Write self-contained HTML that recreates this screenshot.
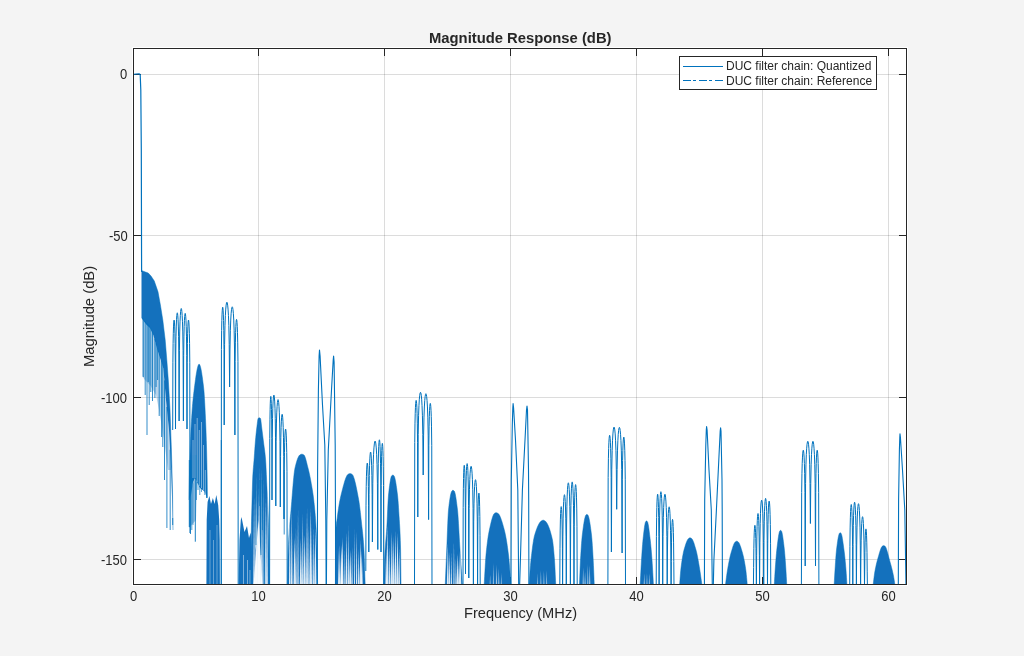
<!DOCTYPE html>
<html><head><meta charset="utf-8"><style>
html,body{margin:0;padding:0;width:1024px;height:656px;overflow:hidden;background:#f4f4f4;}
.t{position:absolute;font-family:"Liberation Sans",sans-serif;color:#262626;white-space:nowrap;line-height:1;will-change:transform;}
svg{position:absolute;left:0;top:0;}
</style></head><body>
<svg width="1024" height="656" viewBox="0 0 1024 656">
<rect x="132" y="47" width="776" height="539" fill="#fff"/>
<g stroke="#262626" stroke-opacity="0.16" stroke-width="1" shape-rendering="crispEdges">
<line x1="258.5" y1="49" x2="258.5" y2="584"/>
<line x1="384.5" y1="49" x2="384.5" y2="584"/>
<line x1="510.5" y1="49" x2="510.5" y2="584"/>
<line x1="636.5" y1="49" x2="636.5" y2="584"/>
<line x1="762.5" y1="49" x2="762.5" y2="584"/>
<line x1="888.5" y1="49" x2="888.5" y2="584"/>
<line x1="134" y1="235.5" x2="906" y2="235.5"/>
<line x1="134" y1="397.5" x2="906" y2="397.5"/>
<line x1="134" y1="559.5" x2="906" y2="559.5"/>
<line x1="134" y1="74.5" x2="906" y2="74.5"/>
</g>
<g stroke="#262626" stroke-width="1" shape-rendering="crispEdges" fill="none">
<line x1="133.5" y1="48" x2="133.5" y2="56"/>
<line x1="133.5" y1="585" x2="133.5" y2="577"/>
<line x1="258.5" y1="48" x2="258.5" y2="56"/>
<line x1="258.5" y1="585" x2="258.5" y2="577"/>
<line x1="384.5" y1="48" x2="384.5" y2="56"/>
<line x1="384.5" y1="585" x2="384.5" y2="577"/>
<line x1="510.5" y1="48" x2="510.5" y2="56"/>
<line x1="510.5" y1="585" x2="510.5" y2="577"/>
<line x1="636.5" y1="48" x2="636.5" y2="56"/>
<line x1="636.5" y1="585" x2="636.5" y2="577"/>
<line x1="762.5" y1="48" x2="762.5" y2="56"/>
<line x1="762.5" y1="585" x2="762.5" y2="577"/>
<line x1="888.5" y1="48" x2="888.5" y2="56"/>
<line x1="888.5" y1="585" x2="888.5" y2="577"/>
<line x1="133" y1="74.5" x2="141" y2="74.5"/>
<line x1="907" y1="74.5" x2="899" y2="74.5"/>
<line x1="133" y1="235.5" x2="141" y2="235.5"/>
<line x1="907" y1="235.5" x2="899" y2="235.5"/>
<line x1="133" y1="397.5" x2="141" y2="397.5"/>
<line x1="907" y1="397.5" x2="899" y2="397.5"/>
<line x1="133" y1="559.5" x2="141" y2="559.5"/>
<line x1="907" y1="559.5" x2="899" y2="559.5"/>
</g>
<g clip-path="url(#clip)">
<clipPath id="clip"><rect x="134" y="49" width="772" height="535"/></clipPath>
<polyline points="133.50,74.50 136.00,74.00 139.00,73.80 140.20,74.60 140.80,90.00 141.30,150.00 141.60,272.00" fill="none" stroke="#0072bd" stroke-width="1.2" stroke-linejoin="round"/>
<polygon points="141.50,270.50 144.00,271.50 148.20,273.00 151.00,276.00 154.30,281.00 158.00,291.80 160.40,305.00 162.80,320.00 165.20,340.00 166.90,361.00 168.30,380.00 170.00,410.00 171.40,450.00 172.50,490.00 173.00,530.00 173.00,530.00 171.20,470.00 169.00,430.00 166.00,400.00 163.30,368.30 160.20,358.50 157.80,351.20 156.00,345.00 153.50,335.40 149.90,328.00 146.20,324.40 142.50,319.50 141.50,318.00" fill="#1471bd"/>
<polyline points="141.50,270.50 144.00,271.50 148.20,273.00 151.00,276.00 154.30,281.00 158.00,291.80 160.40,305.00 162.80,320.00 165.20,340.00 166.90,361.00 168.30,380.00 170.00,410.00 171.40,450.00 172.50,490.00 173.00,530.00" fill="none" stroke="#0072bd" stroke-width="0.8" stroke-opacity="0.6" stroke-linejoin="round"/>
<polygon points="142.00,318.00 146.00,324.00 150.00,328.00 154.00,336.00 158.00,352.00 163.00,368.00 166.00,400.00 169.00,430.00 171.00,470.00 168.00,470.00 164.00,440.00 160.00,415.00 156.00,395.00 150.00,385.00 145.00,380.00 142.00,376.00" fill="#1471bd" fill-opacity="0.3"/>
<line x1="145.20" y1="321.08" x2="145.20" y2="395.00" stroke="#0072bd" stroke-width="1.0" stroke-opacity="0.8"/>
<line x1="148.20" y1="324.35" x2="148.20" y2="382.00" stroke="#0072bd" stroke-width="1.0" stroke-opacity="0.8"/>
<line x1="150.80" y1="327.85" x2="150.80" y2="392.00" stroke="#0072bd" stroke-width="1.0" stroke-opacity="0.8"/>
<line x1="157.60" y1="348.51" x2="157.60" y2="380.00" stroke="#0072bd" stroke-width="1.0" stroke-opacity="0.8"/>
<line x1="143.30" y1="318.56" x2="143.30" y2="377.00" stroke="#0072bd" stroke-width="1.0" stroke-opacity="0.8"/>
<line x1="147.00" y1="323.18" x2="147.00" y2="435.00" stroke="#0072bd" stroke-width="1.0" stroke-opacity="0.8"/>
<line x1="149.20" y1="325.32" x2="149.20" y2="405.00" stroke="#0072bd" stroke-width="1.0" stroke-opacity="0.8"/>
<line x1="152.50" y1="331.34" x2="152.50" y2="401.00" stroke="#0072bd" stroke-width="1.0" stroke-opacity="0.8"/>
<line x1="154.90" y1="338.78" x2="154.90" y2="398.00" stroke="#0072bd" stroke-width="1.0" stroke-opacity="0.8"/>
<line x1="156.10" y1="343.34" x2="156.10" y2="387.00" stroke="#0072bd" stroke-width="1.0" stroke-opacity="0.8"/>
<line x1="159.20" y1="353.46" x2="159.20" y2="416.00" stroke="#0072bd" stroke-width="1.0" stroke-opacity="0.8"/>
<line x1="161.60" y1="360.93" x2="161.60" y2="437.00" stroke="#0072bd" stroke-width="1.0" stroke-opacity="0.8"/>
<line x1="162.80" y1="364.72" x2="162.80" y2="447.00" stroke="#0072bd" stroke-width="1.0" stroke-opacity="0.8"/>
<line x1="164.50" y1="380.39" x2="164.50" y2="480.00" stroke="#0072bd" stroke-width="1.0" stroke-opacity="0.8"/>
<line x1="166.90" y1="407.00" x2="166.90" y2="528.00" stroke="#0072bd" stroke-width="1.0" stroke-opacity="0.8"/>
<line x1="170.20" y1="449.82" x2="170.20" y2="530.00" stroke="#0072bd" stroke-width="1.0" stroke-opacity="0.8"/>
<line x1="172.70" y1="518.00" x2="172.70" y2="525.00" stroke="#0072bd" stroke-width="1.0" stroke-opacity="0.8"/>
<polyline points="172.70,430.00 172.90,362.21 173.10,343.45 173.30,333.27 173.50,326.91 173.70,322.93 173.90,320.71 174.10,320.00 174.30,320.71 174.50,322.93 174.70,326.91 174.90,333.27 175.10,343.45 175.30,362.21 175.50,429.00 175.76,355.01 176.01,336.25 176.27,326.07 176.53,319.71 176.79,315.73 177.04,313.51 177.30,312.80 177.56,313.51 177.81,315.73 178.07,319.71 178.33,326.07 178.59,336.25 178.84,355.01 179.10,421.00 179.41,350.71 179.71,331.95 180.02,321.77 180.33,315.41 180.64,311.43 180.94,309.21 181.25,308.50 181.56,309.21 181.86,311.43 182.17,315.41 182.48,321.77 182.79,331.95 183.09,350.71 183.40,421.00 183.66,355.61 183.91,336.85 184.17,326.67 184.43,320.31 184.69,316.33 184.94,314.11 185.20,313.40 185.46,314.11 185.71,316.33 185.97,320.31 186.23,326.67 186.49,336.85 186.74,355.61 187.00,429.00 187.21,362.21 187.43,343.45 187.64,333.27 187.86,326.91 188.07,322.93 188.29,320.71 188.50,320.00 188.71,320.71 188.93,322.93 189.14,326.91 189.36,333.27 189.57,343.45 189.79,362.21 190.00,533.00" fill="none" stroke="#0072bd" stroke-width="1.0" stroke-linejoin="round"/>
<polygon points="189.00,500.00 189.30,484.15 189.60,470.00 189.86,460.31 190.12,451.45 190.38,443.54 190.64,436.68 190.90,431.00 191.15,426.21 191.41,421.72 191.66,417.53 191.92,413.63 192.17,410.00 192.43,406.63 192.68,403.53 192.94,400.67 193.19,398.05 193.45,395.67 193.70,393.50 193.96,391.42 194.21,389.35 194.47,387.29 194.73,385.27 194.99,383.27 195.24,381.33 195.50,379.44 195.76,377.61 196.01,375.86 196.27,374.19 196.53,372.62 196.79,371.15 197.04,369.79 197.30,368.56 197.56,367.46 197.81,366.51 198.07,365.70 198.33,365.06 198.59,364.59 198.84,364.30 199.10,364.20 199.36,364.30 199.61,364.59 199.87,365.06 200.12,365.71 200.38,366.52 200.63,367.49 200.89,368.61 201.14,369.87 201.40,371.26 201.66,372.78 201.91,374.41 202.17,376.14 202.42,377.98 202.68,379.90 202.93,381.90 203.19,383.97 203.44,386.11 203.70,388.30 203.96,390.95 204.21,394.35 204.47,398.40 204.73,402.98 204.99,407.98 205.24,413.29 205.50,418.80 205.78,425.11 206.05,432.26 206.32,440.49 206.60,450.00 206.90,462.73 207.20,480.00 207.40,498.00 207.40,498.00 204.00,491.00 200.00,488.00 197.00,482.00 195.00,478.00 193.00,482.00 191.00,495.00 189.00,500.00" fill="#1471bd"/>
<polygon points="189.00,495.00 195.00,478.00 197.00,482.00 196.00,520.00 189.00,528.00" fill="#1471bd" fill-opacity="0.4"/>
<polyline points="189.00,500.00 189.30,484.15 189.60,470.00 189.86,460.31 190.12,451.45 190.38,443.54 190.64,436.68 190.90,431.00 191.15,426.21 191.41,421.72 191.66,417.53 191.92,413.63 192.17,410.00 192.43,406.63 192.68,403.53 192.94,400.67 193.19,398.05 193.45,395.67 193.70,393.50 193.96,391.42 194.21,389.35 194.47,387.29 194.73,385.27 194.99,383.27 195.24,381.33 195.50,379.44 195.76,377.61 196.01,375.86 196.27,374.19 196.53,372.62 196.79,371.15 197.04,369.79 197.30,368.56 197.56,367.46 197.81,366.51 198.07,365.70 198.33,365.06 198.59,364.59 198.84,364.30 199.10,364.20 199.36,364.30 199.61,364.59 199.87,365.06 200.12,365.71 200.38,366.52 200.63,367.49 200.89,368.61 201.14,369.87 201.40,371.26 201.66,372.78 201.91,374.41 202.17,376.14 202.42,377.98 202.68,379.90 202.93,381.90 203.19,383.97 203.44,386.11 203.70,388.30 203.96,390.95 204.21,394.35 204.47,398.40 204.73,402.98 204.99,407.98 205.24,413.29 205.50,418.80 205.78,425.11 206.05,432.26 206.32,440.49 206.60,450.00 206.90,462.73 207.20,480.00 207.40,498.00" fill="none" stroke="#0072bd" stroke-width="0.8" stroke-opacity="0.6" stroke-linejoin="round"/>
<line x1="189.30" y1="460.00" x2="189.30" y2="527.00" stroke="#0072bd" stroke-width="1.0" stroke-opacity="0.9"/>
<line x1="190.50" y1="460.00" x2="190.50" y2="534.00" stroke="#0072bd" stroke-width="1.0" stroke-opacity="0.8"/>
<line x1="191.80" y1="460.00" x2="191.80" y2="530.00" stroke="#0072bd" stroke-width="1.0" stroke-opacity="0.7"/>
<line x1="193.00" y1="455.00" x2="193.00" y2="525.00" stroke="#0072bd" stroke-width="1.0" stroke-opacity="0.6"/>
<line x1="195.30" y1="455.00" x2="195.30" y2="541.70" stroke="#0072bd" stroke-width="1.0" stroke-opacity="0.9"/>
<line x1="196.50" y1="455.00" x2="196.50" y2="500.00" stroke="#0072bd" stroke-width="1.0" stroke-opacity="0.6"/>
<line x1="198.00" y1="460.00" x2="198.00" y2="490.00" stroke="#0072bd" stroke-width="1.0" stroke-opacity="0.7"/>
<line x1="199.80" y1="470.00" x2="199.80" y2="495.00" stroke="#0072bd" stroke-width="1.0" stroke-opacity="0.7"/>
<line x1="201.50" y1="470.00" x2="201.50" y2="492.00" stroke="#0072bd" stroke-width="1.0" stroke-opacity="0.6"/>
<line x1="203.00" y1="480.00" x2="203.00" y2="488.00" stroke="#0072bd" stroke-width="1.0" stroke-opacity="0.8"/>
<line x1="204.90" y1="480.00" x2="204.90" y2="495.00" stroke="#0072bd" stroke-width="1.0" stroke-opacity="0.8"/>
<line x1="206.50" y1="480.00" x2="206.50" y2="498.00" stroke="#0072bd" stroke-width="1.0" stroke-opacity="0.8"/>
<line x1="193.00" y1="440.00" x2="193.00" y2="478.00" stroke="#ffffff" stroke-width="0.8" stroke-opacity="0.55"/>
<line x1="195.00" y1="424.00" x2="195.00" y2="478.00" stroke="#ffffff" stroke-width="0.8" stroke-opacity="0.55"/>
<line x1="197.20" y1="418.00" x2="197.20" y2="482.00" stroke="#ffffff" stroke-width="0.8" stroke-opacity="0.55"/>
<line x1="199.30" y1="430.00" x2="199.30" y2="486.00" stroke="#ffffff" stroke-width="0.8" stroke-opacity="0.55"/>
<line x1="201.50" y1="422.00" x2="201.50" y2="488.00" stroke="#ffffff" stroke-width="0.8" stroke-opacity="0.55"/>
<line x1="203.50" y1="445.00" x2="203.50" y2="490.00" stroke="#ffffff" stroke-width="0.8" stroke-opacity="0.55"/>
<line x1="205.30" y1="470.00" x2="205.30" y2="495.00" stroke="#ffffff" stroke-width="0.8" stroke-opacity="0.55"/>
<polygon points="206.40,586.00 206.70,520.00 207.60,502.00 209.40,496.00 211.00,504.00 212.90,498.00 214.60,504.00 216.30,494.90 218.20,505.00 219.20,520.00 219.70,540.00 219.90,586.00" fill="#1471bd"/>
<line x1="210.00" y1="530.00" x2="210.00" y2="586.00" stroke="#ffffff" stroke-width="0.8" stroke-opacity="0.45"/>
<line x1="213.50" y1="540.00" x2="213.50" y2="586.00" stroke="#ffffff" stroke-width="0.8" stroke-opacity="0.45"/>
<line x1="217.00" y1="525.00" x2="217.00" y2="586.00" stroke="#ffffff" stroke-width="0.8" stroke-opacity="0.45"/>
<line x1="221.30" y1="440.00" x2="221.30" y2="586.00" stroke="#0072bd" stroke-width="1.0" stroke-opacity="0.9"/>
<polyline points="221.20,586.00 221.41,349.41 221.63,330.65 221.84,320.47 222.06,314.11 222.27,310.13 222.49,307.91 222.70,307.20 222.91,307.91 223.13,310.13 223.34,314.11 223.56,320.47 223.77,330.65 223.99,349.41 224.20,425.00 224.59,344.41 224.97,325.65 225.36,315.47 225.74,309.11 226.13,305.13 226.51,302.91 226.90,302.20 227.29,302.91 227.67,305.13 228.06,309.11 228.44,315.47 228.83,325.65 229.21,344.41 229.60,387.00 229.98,349.01 230.36,330.25 230.74,320.07 231.11,313.71 231.49,309.73 231.87,307.51 232.25,306.80 232.63,307.51 233.01,309.73 233.39,313.71 233.76,320.07 234.14,330.25 234.52,349.01 234.90,435.00 235.14,361.61 235.37,342.85 235.61,332.67 235.84,326.31 236.08,322.33 236.31,320.11 236.55,319.40 236.79,320.11 237.02,322.33 237.26,326.31 237.49,332.67 237.73,342.85 237.96,361.61 238.20,586.00" fill="none" stroke="#0072bd" stroke-width="1.0" stroke-linejoin="round"/>
<polygon points="238.60,586.00 239.50,540.00 240.80,520.00 241.50,517.00 242.50,522.00 244.50,532.00 247.00,526.00 249.00,538.00 250.70,532.40 251.80,548.00 252.50,586.00" fill="#1471bd"/>
<line x1="243.50" y1="555.00" x2="243.50" y2="586.00" stroke="#ffffff" stroke-width="0.9" stroke-opacity="0.5"/>
<line x1="247.50" y1="560.00" x2="247.50" y2="586.00" stroke="#ffffff" stroke-width="0.9" stroke-opacity="0.5"/>
<line x1="250.00" y1="570.00" x2="250.00" y2="586.00" stroke="#ffffff" stroke-width="0.9" stroke-opacity="0.5"/>
<polygon points="251.00,586.00 251.00,586.00 251.20,540.00 251.50,521.18 251.80,510.00 252.05,499.79 252.30,490.22 252.55,482.04 252.80,476.00 253.10,471.15 253.40,467.45 253.70,464.18 254.00,460.60 254.25,457.16 254.50,453.55 254.75,449.90 255.00,446.34 255.25,443.00 255.50,440.00 255.75,437.30 256.00,434.75 256.25,432.36 256.50,430.10 256.75,427.98 257.00,426.00 257.28,423.67 257.57,421.33 257.85,419.45 258.13,418.50 258.40,418.21 258.67,417.99 258.93,417.85 259.20,417.80 259.47,417.83 259.73,417.91 260.00,418.06 260.26,418.25 260.53,418.50 260.85,420.03 261.18,423.00 261.50,426.00 261.75,427.96 262.00,429.93 262.25,431.90 262.50,433.89 262.75,435.89 263.00,437.91 263.25,439.94 263.50,442.00 263.76,444.07 264.02,446.02 264.29,447.92 264.55,449.87 264.81,451.96 265.08,454.28 265.34,456.93 265.60,460.00 265.85,463.93 266.10,468.99 266.35,474.56 266.60,480.00 266.88,485.57 267.16,490.96 267.44,496.58 267.72,502.79 268.00,510.00 268.27,518.06 268.53,527.81 268.80,540.00 269.10,561.09 269.40,586.00 269.40,586.00" fill="#1471bd"/>
<polyline points="251.00,586.00 251.20,540.00 251.50,521.18 251.80,510.00 252.05,499.79 252.30,490.22 252.55,482.04 252.80,476.00 253.10,471.15 253.40,467.45 253.70,464.18 254.00,460.60 254.25,457.16 254.50,453.55 254.75,449.90 255.00,446.34 255.25,443.00 255.50,440.00 255.75,437.30 256.00,434.75 256.25,432.36 256.50,430.10 256.75,427.98 257.00,426.00 257.28,423.67 257.57,421.33 257.85,419.45 258.13,418.50 258.40,418.21 258.67,417.99 258.93,417.85 259.20,417.80 259.47,417.83 259.73,417.91 260.00,418.06 260.26,418.25 260.53,418.50 260.85,420.03 261.18,423.00 261.50,426.00 261.75,427.96 262.00,429.93 262.25,431.90 262.50,433.89 262.75,435.89 263.00,437.91 263.25,439.94 263.50,442.00 263.76,444.07 264.02,446.02 264.29,447.92 264.55,449.87 264.81,451.96 265.08,454.28 265.34,456.93 265.60,460.00 265.85,463.93 266.10,468.99 266.35,474.56 266.60,480.00 266.88,485.57 267.16,490.96 267.44,496.58 267.72,502.79 268.00,510.00 268.27,518.06 268.53,527.81 268.80,540.00 269.10,561.09 269.40,586.00" fill="none" stroke="#0072bd" stroke-width="0.8" stroke-opacity="0.6" stroke-linejoin="round"/>
<polygon points="254.07,496.35 255.08,586 253.06,586" fill="#ffffff" fill-opacity="0.7"/>
<polygon points="256.20,475.50 257.33,586 255.06,586" fill="#ffffff" fill-opacity="0.7"/>
<polygon points="258.34,488.55 259.24,586 257.44,586" fill="#ffffff" fill-opacity="0.7"/>
<polygon points="259.58,466.14 260.38,586 258.78,586" fill="#ffffff" fill-opacity="0.7"/>
<polygon points="261.74,469.05 262.88,586 260.61,586" fill="#ffffff" fill-opacity="0.7"/>
<polygon points="263.20,476.24 263.73,586 262.67,586" fill="#ffffff" fill-opacity="0.7"/>
<polygon points="265.78,498.50 266.98,586 264.58,586" fill="#ffffff" fill-opacity="0.7"/>
<polygon points="267.21,467.50 267.97,586 266.45,586" fill="#ffffff" fill-opacity="0.7"/>
<polygon points="258.50,520.00 262.50,586.00 253.50,586.00" fill="#ffffff" fill-opacity="0.9"/>
<polygon points="256.00,500.00 258.00,540.00 255.00,550.00" fill="#ffffff" fill-opacity="0.5"/>
<line x1="256.00" y1="480.00" x2="256.00" y2="545.00" stroke="#0072bd" stroke-width="0.9" stroke-opacity="0.7"/>
<line x1="259.50" y1="480.00" x2="259.50" y2="506.00" stroke="#0072bd" stroke-width="0.9" stroke-opacity="0.7"/>
<line x1="261.00" y1="480.00" x2="261.00" y2="555.00" stroke="#0072bd" stroke-width="0.9" stroke-opacity="0.7"/>
<line x1="262.50" y1="480.00" x2="262.50" y2="530.00" stroke="#0072bd" stroke-width="0.9" stroke-opacity="0.7"/>
<line x1="264.20" y1="520.00" x2="264.20" y2="586.00" stroke="#0072bd" stroke-width="1.0" stroke-opacity="0.6"/>
<polyline points="269.60,586.00 269.77,438.61 269.94,419.85 270.11,409.67 270.29,403.31 270.46,399.33 270.63,397.11 270.80,396.40 270.97,397.11 271.14,399.33 271.31,403.31 271.49,409.67 271.66,419.85 271.83,438.61 272.00,500.00 272.27,437.21 272.54,418.45 272.81,408.27 273.09,401.91 273.36,397.93 273.63,395.71 273.90,395.00 274.17,395.71 274.44,397.93 274.71,401.91 274.99,408.27 275.26,418.45 275.53,437.21 275.80,506.00 276.12,441.81 276.44,423.05 276.76,412.87 277.09,406.51 277.41,402.53 277.73,400.31 278.05,399.60 278.37,400.31 278.69,402.53 279.01,406.51 279.34,412.87 279.66,423.05 279.98,441.81 280.30,507.00 280.56,456.51 280.83,437.75 281.09,427.57 281.36,421.21 281.62,417.23 281.89,415.01 282.15,414.30 282.41,415.01 282.68,417.23 282.94,421.21 283.21,427.57 283.47,437.75 283.74,456.51 284.00,519.00 284.23,471.21 284.46,452.45 284.69,442.27 284.91,435.91 285.14,431.93 285.37,429.71 285.60,429.00 285.83,429.71 286.06,431.93 286.29,435.91 286.51,442.27 286.74,452.45 286.97,471.21 287.20,586.00" fill="none" stroke="#0072bd" stroke-width="1.0" stroke-linejoin="round"/>
<line x1="284.20" y1="470.00" x2="284.20" y2="534.50" stroke="#0072bd" stroke-width="1.0" stroke-opacity="0.8"/>
<polygon points="287.40,586.00 287.40,586.00 287.67,572.74 287.93,559.48 288.20,550.00 288.45,544.41 288.70,539.48 288.95,535.11 289.20,531.23 289.45,527.76 289.70,524.62 289.95,521.72 290.20,518.98 290.45,516.32 290.70,513.66 290.95,510.91 291.20,508.00 291.45,504.89 291.71,501.71 291.96,498.49 292.21,495.26 292.47,492.05 292.72,488.90 292.97,485.82 293.23,482.87 293.48,480.06 293.73,477.42 293.99,475.00 294.24,472.81 294.49,470.89 294.75,469.28 295.00,468.00 295.26,466.89 295.52,465.81 295.78,464.78 296.04,463.79 296.30,462.84 296.56,461.93 296.82,461.07 297.07,460.26 297.33,459.49 297.59,458.78 297.85,458.12 298.11,457.51 298.37,456.96 298.63,456.46 298.89,456.03 299.15,455.65 299.41,455.34 299.67,455.09 299.93,454.90 300.20,454.75 300.46,454.60 300.73,454.47 301.00,454.36 301.27,454.27 301.53,454.22 301.80,454.20 302.06,454.21 302.31,454.26 302.57,454.32 302.83,454.41 303.08,454.51 303.34,454.63 303.60,454.76 303.85,454.90 304.11,455.12 304.37,455.47 304.63,455.95 304.89,456.54 305.15,457.22 305.41,458.00 305.67,458.85 305.93,459.77 306.19,460.74 306.45,461.75 306.70,462.79 306.96,463.84 307.22,464.90 307.48,465.96 307.74,466.99 308.00,468.00 308.25,468.97 308.50,469.97 308.75,471.00 309.00,472.07 309.25,473.18 309.50,474.32 309.75,475.50 310.00,476.72 310.25,477.98 310.50,479.28 310.75,480.62 311.00,482.00 311.25,483.40 311.50,484.81 311.75,486.25 312.00,487.71 312.25,489.22 312.50,490.79 312.75,492.44 313.00,494.16 313.25,495.99 313.50,497.92 313.75,499.97 314.00,502.16 314.25,504.50 314.50,507.00 314.75,509.62 315.00,512.37 315.25,515.34 315.50,518.62 315.75,522.31 316.00,526.49 316.25,531.26 316.50,536.71 316.75,542.92 317.00,550.00 317.30,565.76 317.60,586.00 317.60,586.00" fill="#1471bd"/>
<polyline points="287.40,586.00 287.67,572.74 287.93,559.48 288.20,550.00 288.45,544.41 288.70,539.48 288.95,535.11 289.20,531.23 289.45,527.76 289.70,524.62 289.95,521.72 290.20,518.98 290.45,516.32 290.70,513.66 290.95,510.91 291.20,508.00 291.45,504.89 291.71,501.71 291.96,498.49 292.21,495.26 292.47,492.05 292.72,488.90 292.97,485.82 293.23,482.87 293.48,480.06 293.73,477.42 293.99,475.00 294.24,472.81 294.49,470.89 294.75,469.28 295.00,468.00 295.26,466.89 295.52,465.81 295.78,464.78 296.04,463.79 296.30,462.84 296.56,461.93 296.82,461.07 297.07,460.26 297.33,459.49 297.59,458.78 297.85,458.12 298.11,457.51 298.37,456.96 298.63,456.46 298.89,456.03 299.15,455.65 299.41,455.34 299.67,455.09 299.93,454.90 300.20,454.75 300.46,454.60 300.73,454.47 301.00,454.36 301.27,454.27 301.53,454.22 301.80,454.20 302.06,454.21 302.31,454.26 302.57,454.32 302.83,454.41 303.08,454.51 303.34,454.63 303.60,454.76 303.85,454.90 304.11,455.12 304.37,455.47 304.63,455.95 304.89,456.54 305.15,457.22 305.41,458.00 305.67,458.85 305.93,459.77 306.19,460.74 306.45,461.75 306.70,462.79 306.96,463.84 307.22,464.90 307.48,465.96 307.74,466.99 308.00,468.00 308.25,468.97 308.50,469.97 308.75,471.00 309.00,472.07 309.25,473.18 309.50,474.32 309.75,475.50 310.00,476.72 310.25,477.98 310.50,479.28 310.75,480.62 311.00,482.00 311.25,483.40 311.50,484.81 311.75,486.25 312.00,487.71 312.25,489.22 312.50,490.79 312.75,492.44 313.00,494.16 313.25,495.99 313.50,497.92 313.75,499.97 314.00,502.16 314.25,504.50 314.50,507.00 314.75,509.62 315.00,512.37 315.25,515.34 315.50,518.62 315.75,522.31 316.00,526.49 316.25,531.26 316.50,536.71 316.75,542.92 317.00,550.00 317.30,565.76 317.60,586.00" fill="none" stroke="#0072bd" stroke-width="0.8" stroke-opacity="0.6" stroke-linejoin="round"/>
<polygon points="289.77,509.13 290.59,586 288.96,586" fill="#ffffff" fill-opacity="0.85"/>
<polygon points="291.77,507.66 292.59,586 290.95,586" fill="#ffffff" fill-opacity="0.85"/>
<polygon points="294.61,537.02 295.72,586 293.50,586" fill="#ffffff" fill-opacity="0.85"/>
<polygon points="295.99,526.47 296.71,586 295.27,586" fill="#ffffff" fill-opacity="0.85"/>
<polygon points="298.02,509.25 298.69,586 297.35,586" fill="#ffffff" fill-opacity="0.85"/>
<polygon points="300.85,538.16 302.00,586 299.71,586" fill="#ffffff" fill-opacity="0.85"/>
<polygon points="302.80,512.74 303.55,586 302.05,586" fill="#ffffff" fill-opacity="0.85"/>
<polygon points="304.70,534.28 305.89,586 303.52,586" fill="#ffffff" fill-opacity="0.85"/>
<polygon points="307.03,508.47 308.02,586 306.05,586" fill="#ffffff" fill-opacity="0.85"/>
<polygon points="308.90,525.24 309.54,586 308.26,586" fill="#ffffff" fill-opacity="0.85"/>
<polygon points="310.78,508.57 312.03,586 309.53,586" fill="#ffffff" fill-opacity="0.85"/>
<polygon points="313.25,526.91 313.99,586 312.51,586" fill="#ffffff" fill-opacity="0.85"/>
<polygon points="315.37,527.89 316.58,586 314.16,586" fill="#ffffff" fill-opacity="0.85"/>
<polyline points="317.30,586.00 317.60,470.00 318.40,390.00 319.10,356.00 319.50,350.10 320.10,356.00 322.50,405.00 324.80,445.00 325.80,520.00 326.20,586.00" fill="none" stroke="#0072bd" stroke-width="1.1" stroke-linejoin="round"/>
<polyline points="326.40,586.00 326.80,520.00 328.30,450.00 331.50,390.00 333.20,360.00 333.60,356.00 334.10,362.00 335.20,445.00 335.50,520.00 335.60,586.00" fill="none" stroke="#0072bd" stroke-width="1.1" stroke-linejoin="round"/>
<polygon points="335.40,586.00 335.40,586.00 335.50,540.00 335.78,531.94 336.07,526.75 336.35,523.62 336.63,521.72 336.92,520.22 337.20,518.30 337.46,516.12 337.72,514.05 337.99,512.08 338.25,510.20 338.51,508.42 338.77,506.72 339.04,505.11 339.30,503.57 339.56,502.11 339.82,500.72 340.09,499.40 340.35,498.13 340.61,496.92 340.88,495.77 341.14,494.66 341.40,493.60 341.66,492.58 341.92,491.55 342.17,490.53 342.43,489.52 342.69,488.51 342.95,487.51 343.20,486.53 343.46,485.57 343.72,484.63 343.98,483.70 344.24,482.81 344.49,481.94 344.75,481.10 345.01,480.30 345.27,479.53 345.52,478.80 345.78,478.12 346.04,477.48 346.30,476.88 346.56,476.34 346.81,475.85 347.07,475.42 347.33,475.04 347.59,474.73 347.84,474.48 348.10,474.30 348.37,474.15 348.64,474.00 348.92,473.87 349.19,473.76 349.46,473.68 349.73,473.62 350.00,473.60 350.28,473.62 350.56,473.67 350.85,473.76 351.13,473.87 351.41,474.00 351.69,474.14 351.98,474.30 352.23,474.49 352.49,474.77 352.74,475.14 353.00,475.59 353.25,476.11 353.50,476.72 353.76,477.40 354.01,478.14 354.27,478.95 354.52,479.83 354.78,480.76 355.03,481.74 355.29,482.78 355.54,483.87 355.80,484.99 356.05,486.16 356.31,487.37 356.56,488.61 356.82,489.88 357.07,491.17 357.33,492.49 357.58,493.83 357.84,495.18 358.09,496.55 358.35,497.92 358.60,499.30 358.85,500.77 359.11,502.42 359.36,504.21 359.62,506.15 359.87,508.20 360.13,510.36 360.38,512.59 360.64,514.89 360.89,517.24 361.15,519.61 361.40,522.00 361.66,524.38 361.92,526.69 362.18,528.99 362.44,531.37 362.70,533.87 362.96,536.57 363.22,539.54 363.48,542.84 363.74,546.54 364.00,550.70 364.30,557.43 364.60,566.49 364.90,576.48 365.20,586.00 365.20,586.00" fill="#1471bd"/>
<polyline points="335.40,586.00 335.50,540.00 335.78,531.94 336.07,526.75 336.35,523.62 336.63,521.72 336.92,520.22 337.20,518.30 337.46,516.12 337.72,514.05 337.99,512.08 338.25,510.20 338.51,508.42 338.77,506.72 339.04,505.11 339.30,503.57 339.56,502.11 339.82,500.72 340.09,499.40 340.35,498.13 340.61,496.92 340.88,495.77 341.14,494.66 341.40,493.60 341.66,492.58 341.92,491.55 342.17,490.53 342.43,489.52 342.69,488.51 342.95,487.51 343.20,486.53 343.46,485.57 343.72,484.63 343.98,483.70 344.24,482.81 344.49,481.94 344.75,481.10 345.01,480.30 345.27,479.53 345.52,478.80 345.78,478.12 346.04,477.48 346.30,476.88 346.56,476.34 346.81,475.85 347.07,475.42 347.33,475.04 347.59,474.73 347.84,474.48 348.10,474.30 348.37,474.15 348.64,474.00 348.92,473.87 349.19,473.76 349.46,473.68 349.73,473.62 350.00,473.60 350.28,473.62 350.56,473.67 350.85,473.76 351.13,473.87 351.41,474.00 351.69,474.14 351.98,474.30 352.23,474.49 352.49,474.77 352.74,475.14 353.00,475.59 353.25,476.11 353.50,476.72 353.76,477.40 354.01,478.14 354.27,478.95 354.52,479.83 354.78,480.76 355.03,481.74 355.29,482.78 355.54,483.87 355.80,484.99 356.05,486.16 356.31,487.37 356.56,488.61 356.82,489.88 357.07,491.17 357.33,492.49 357.58,493.83 357.84,495.18 358.09,496.55 358.35,497.92 358.60,499.30 358.85,500.77 359.11,502.42 359.36,504.21 359.62,506.15 359.87,508.20 360.13,510.36 360.38,512.59 360.64,514.89 360.89,517.24 361.15,519.61 361.40,522.00 361.66,524.38 361.92,526.69 362.18,528.99 362.44,531.37 362.70,533.87 362.96,536.57 363.22,539.54 363.48,542.84 363.74,546.54 364.00,550.70 364.30,557.43 364.60,566.49 364.90,576.48 365.20,586.00" fill="none" stroke="#0072bd" stroke-width="0.8" stroke-opacity="0.6" stroke-linejoin="round"/>
<polygon points="339.08,545.03 340.22,586 337.95,586" fill="#ffffff" fill-opacity="0.85"/>
<polygon points="341.33,544.98 342.56,586 340.09,586" fill="#ffffff" fill-opacity="0.85"/>
<polygon points="342.34,537.57 343.59,586 341.08,586" fill="#ffffff" fill-opacity="0.85"/>
<polygon points="344.88,549.32 345.47,586 344.29,586" fill="#ffffff" fill-opacity="0.85"/>
<polygon points="346.62,531.66 347.56,586 345.69,586" fill="#ffffff" fill-opacity="0.85"/>
<polygon points="348.65,525.35 349.32,586 347.98,586" fill="#ffffff" fill-opacity="0.85"/>
<polygon points="350.28,549.74 351.39,586 349.17,586" fill="#ffffff" fill-opacity="0.85"/>
<polygon points="352.08,546.52 352.69,586 351.47,586" fill="#ffffff" fill-opacity="0.85"/>
<polygon points="354.46,528.42 354.97,586 353.96,586" fill="#ffffff" fill-opacity="0.85"/>
<polygon points="356.64,530.66 357.31,586 355.97,586" fill="#ffffff" fill-opacity="0.85"/>
<polygon points="358.67,548.56 359.41,586 357.94,586" fill="#ffffff" fill-opacity="0.85"/>
<polygon points="360.58,539.56 361.62,586 359.53,586" fill="#ffffff" fill-opacity="0.85"/>
<polygon points="361.74,550.41 362.80,586 360.69,586" fill="#ffffff" fill-opacity="0.85"/>
<polyline points="365.80,571.00 366.01,505.21 366.23,486.45 366.44,476.27 366.66,469.91 366.87,465.93 367.09,463.71 367.30,463.00 367.51,463.71 367.73,465.93 367.94,469.91 368.16,476.27 368.37,486.45 368.59,505.21 368.80,552.00 369.06,494.21 369.31,475.45 369.57,465.27 369.83,458.91 370.09,454.93 370.34,452.71 370.60,452.00 370.86,452.71 371.11,454.93 371.37,458.91 371.63,465.27 371.89,475.45 372.14,494.21 372.40,542.00 372.79,483.21 373.17,464.45 373.56,454.27 373.94,447.91 374.33,443.93 374.71,441.71 375.10,441.00 375.49,441.71 375.87,443.93 376.26,447.91 376.64,454.27 377.03,464.45 377.41,483.21 377.80,549.50 378.03,482.01 378.26,463.25 378.49,453.07 378.71,446.71 378.94,442.73 379.17,440.51 379.40,439.80 379.63,440.51 379.86,442.73 380.09,446.71 380.31,453.07 380.54,463.25 380.77,482.01 381.00,552.00 381.19,485.61 381.39,466.85 381.58,456.67 381.77,450.31 381.96,446.33 382.16,444.11 382.35,443.40 382.54,444.11 382.74,446.33 382.93,450.31 383.12,456.67 383.31,466.85 383.51,485.61 383.70,586.00" fill="none" stroke="#0072bd" stroke-width="1.0" stroke-linejoin="round"/>
<polygon points="383.70,586.00 383.70,586.00 383.97,576.65 384.23,567.30 384.50,560.00 384.76,555.06 385.01,550.87 385.27,547.24 385.52,544.00 385.78,540.98 386.03,538.00 386.29,534.90 386.54,531.49 386.80,527.60 387.08,522.34 387.37,516.24 387.65,509.87 387.93,503.82 388.22,498.67 388.50,495.00 388.77,492.48 389.03,490.07 389.30,487.80 389.57,485.67 389.83,483.70 390.10,481.92 390.37,480.32 390.64,478.94 390.90,477.78 391.17,476.86 391.44,476.19 391.70,475.80 392.00,475.53 392.30,475.31 392.60,475.16 392.90,475.10 393.16,475.16 393.43,475.31 393.69,475.54 393.95,475.80 394.21,476.17 394.46,476.74 394.71,477.50 394.97,478.44 395.22,479.55 395.47,480.81 395.73,482.21 395.98,483.75 396.23,485.40 396.49,487.16 396.74,489.01 396.99,490.94 397.25,492.94 397.50,495.00 397.75,497.36 398.00,500.27 398.25,503.62 398.50,507.32 398.75,511.28 399.00,515.40 399.27,519.58 399.53,523.61 399.80,528.08 400.07,533.58 400.33,540.69 400.60,550.00 401.00,586.00 401.00,586.00" fill="#1471bd"/>
<polyline points="383.70,586.00 383.97,576.65 384.23,567.30 384.50,560.00 384.76,555.06 385.01,550.87 385.27,547.24 385.52,544.00 385.78,540.98 386.03,538.00 386.29,534.90 386.54,531.49 386.80,527.60 387.08,522.34 387.37,516.24 387.65,509.87 387.93,503.82 388.22,498.67 388.50,495.00 388.77,492.48 389.03,490.07 389.30,487.80 389.57,485.67 389.83,483.70 390.10,481.92 390.37,480.32 390.64,478.94 390.90,477.78 391.17,476.86 391.44,476.19 391.70,475.80 392.00,475.53 392.30,475.31 392.60,475.16 392.90,475.10 393.16,475.16 393.43,475.31 393.69,475.54 393.95,475.80 394.21,476.17 394.46,476.74 394.71,477.50 394.97,478.44 395.22,479.55 395.47,480.81 395.73,482.21 395.98,483.75 396.23,485.40 396.49,487.16 396.74,489.01 396.99,490.94 397.25,492.94 397.50,495.00 397.75,497.36 398.00,500.27 398.25,503.62 398.50,507.32 398.75,511.28 399.00,515.40 399.27,519.58 399.53,523.61 399.80,528.08 400.07,533.58 400.33,540.69 400.60,550.00 401.00,586.00" fill="none" stroke="#0072bd" stroke-width="0.8" stroke-opacity="0.6" stroke-linejoin="round"/>
<polygon points="386.23,547.19 387.12,586 385.34,586" fill="#ffffff" fill-opacity="0.85"/>
<polygon points="387.57,525.01 388.60,586 386.54,586" fill="#ffffff" fill-opacity="0.85"/>
<polygon points="389.66,545.51 390.46,586 388.86,586" fill="#ffffff" fill-opacity="0.85"/>
<polygon points="391.83,532.36 392.97,586 390.69,586" fill="#ffffff" fill-opacity="0.85"/>
<polygon points="393.67,536.18 394.60,586 392.74,586" fill="#ffffff" fill-opacity="0.85"/>
<polygon points="395.49,530.21 396.44,586 394.55,586" fill="#ffffff" fill-opacity="0.85"/>
<polygon points="397.49,532.17 398.64,586 396.35,586" fill="#ffffff" fill-opacity="0.85"/>
<polygon points="399.25,547.80 400.02,586 398.48,586" fill="#ffffff" fill-opacity="0.85"/>
<polyline points="414.50,586.00 414.74,442.61 414.97,423.85 415.21,413.67 415.44,407.31 415.68,403.33 415.91,401.11 416.15,400.40 416.39,401.11 416.62,403.33 416.86,407.31 417.09,413.67 417.33,423.85 417.56,442.61 417.80,517.00 418.19,434.51 418.57,415.75 418.96,405.57 419.34,399.21 419.73,395.23 420.11,393.01 420.50,392.30 420.89,393.01 421.27,395.23 421.66,399.21 422.04,405.57 422.43,415.75 422.81,434.51 423.20,475.00 423.59,435.91 423.97,417.15 424.36,406.97 424.74,400.61 425.13,396.63 425.51,394.41 425.90,393.70 426.29,394.41 426.67,396.63 427.06,400.61 427.44,406.97 427.83,417.15 428.21,435.91 428.60,519.60 428.84,445.61 429.09,426.85 429.33,416.67 429.57,410.31 429.81,406.33 430.06,404.11 430.30,403.40 430.54,404.11 430.79,406.33 431.03,410.31 431.27,416.67 431.51,426.85 431.76,445.61 432.00,586.00" fill="none" stroke="#0072bd" stroke-width="1.0" stroke-linejoin="round"/>
<polygon points="445.20,586.00 445.20,586.00 445.45,579.97 445.70,573.90 445.95,567.83 446.20,561.80 446.45,555.84 446.70,550.00 446.96,543.72 447.21,537.01 447.47,530.23 447.73,523.78 447.99,518.00 448.24,513.29 448.50,510.00 448.76,507.58 449.02,505.30 449.28,503.17 449.55,501.18 449.81,499.36 450.07,497.69 450.33,496.19 450.59,494.86 450.85,493.72 451.11,492.75 451.38,491.97 451.64,491.39 451.90,491.00 452.15,490.74 452.40,490.51 452.65,490.36 452.90,490.30 453.21,490.36 453.52,490.51 453.84,490.73 454.15,491.00 454.41,491.36 454.66,491.97 454.92,492.81 455.18,493.86 455.44,495.10 455.70,496.52 455.95,498.10 456.21,499.82 456.47,501.67 456.73,503.63 456.98,505.69 457.24,507.81 457.50,510.00 457.75,512.51 458.00,515.69 458.25,519.40 458.50,523.53 458.75,527.94 459.00,532.52 459.25,537.14 459.50,541.68 459.75,546.00 460.00,550.00 460.25,553.75 460.50,557.44 460.75,561.08 461.00,564.67 461.25,568.24 461.50,571.78 461.75,575.32 462.00,578.86 462.25,582.42 462.50,586.00 462.50,586.00" fill="#1471bd"/>
<polyline points="445.20,586.00 445.45,579.97 445.70,573.90 445.95,567.83 446.20,561.80 446.45,555.84 446.70,550.00 446.96,543.72 447.21,537.01 447.47,530.23 447.73,523.78 447.99,518.00 448.24,513.29 448.50,510.00 448.76,507.58 449.02,505.30 449.28,503.17 449.55,501.18 449.81,499.36 450.07,497.69 450.33,496.19 450.59,494.86 450.85,493.72 451.11,492.75 451.38,491.97 451.64,491.39 451.90,491.00 452.15,490.74 452.40,490.51 452.65,490.36 452.90,490.30 453.21,490.36 453.52,490.51 453.84,490.73 454.15,491.00 454.41,491.36 454.66,491.97 454.92,492.81 455.18,493.86 455.44,495.10 455.70,496.52 455.95,498.10 456.21,499.82 456.47,501.67 456.73,503.63 456.98,505.69 457.24,507.81 457.50,510.00 457.75,512.51 458.00,515.69 458.25,519.40 458.50,523.53 458.75,527.94 459.00,532.52 459.25,537.14 459.50,541.68 459.75,546.00 460.00,550.00 460.25,553.75 460.50,557.44 460.75,561.08 461.00,564.67 461.25,568.24 461.50,571.78 461.75,575.32 462.00,578.86 462.25,582.42 462.50,586.00" fill="none" stroke="#0072bd" stroke-width="0.8" stroke-opacity="0.6" stroke-linejoin="round"/>
<polygon points="447.82,543.32 448.84,586 446.80,586" fill="#ffffff" fill-opacity="0.85"/>
<polygon points="449.57,551.79 450.36,586 448.78,586" fill="#ffffff" fill-opacity="0.85"/>
<polygon points="451.56,551.16 452.09,586 451.03,586" fill="#ffffff" fill-opacity="0.85"/>
<polygon points="453.93,541.54 454.51,586 453.36,586" fill="#ffffff" fill-opacity="0.85"/>
<polygon points="455.92,558.19 456.52,586 455.33,586" fill="#ffffff" fill-opacity="0.85"/>
<polygon points="457.72,553.80 458.98,586 456.47,586" fill="#ffffff" fill-opacity="0.85"/>
<polygon points="460.08,548.73 461.36,586 458.80,586" fill="#ffffff" fill-opacity="0.85"/>
<polyline points="463.00,586.00 463.18,507.51 463.36,488.75 463.54,478.57 463.71,472.21 463.89,468.23 464.07,466.01 464.25,465.30 464.43,466.01 464.61,468.23 464.79,472.21 464.96,478.57 465.14,488.75 465.32,507.51 465.50,574.00 465.74,505.81 465.97,487.05 466.21,476.87 466.44,470.51 466.68,466.53 466.91,464.31 467.15,463.60 467.39,464.31 467.62,466.53 467.86,470.51 468.09,476.87 468.33,487.05 468.56,505.81 468.80,578.00 469.13,508.51 469.46,489.75 469.79,479.57 470.11,473.21 470.44,469.23 470.77,467.01 471.10,466.30 471.43,467.01 471.76,469.23 472.09,473.21 472.41,479.57 472.74,489.75 473.07,508.51 473.40,586.00 473.70,521.91 474.00,503.15 474.30,492.97 474.60,486.61 474.90,482.63 475.20,480.41 475.50,479.70 475.80,480.41 476.10,482.63 476.40,486.61 476.70,492.97 477.00,503.15 477.30,521.91 477.60,586.00 477.79,535.21 477.97,516.45 478.16,506.27 478.34,499.91 478.53,495.93 478.71,493.71 478.90,493.00 479.09,493.71 479.27,495.93 479.46,499.91 479.64,506.27 479.83,516.45 480.01,535.21 480.20,586.00" fill="none" stroke="#0072bd" stroke-width="1.0" stroke-linejoin="round"/>
<polygon points="484.10,586.00 484.10,586.00 484.37,581.38 484.64,576.51 484.91,571.58 485.19,566.77 485.46,562.28 485.73,558.29 486.00,555.00 486.25,552.37 486.51,549.88 486.76,547.51 487.02,545.27 487.27,543.16 487.52,541.16 487.78,539.28 488.03,537.52 488.28,535.87 488.54,534.32 488.79,532.88 489.05,531.54 489.30,530.30 489.56,529.09 489.82,527.90 490.07,526.72 490.33,525.56 490.59,524.43 490.85,523.32 491.10,522.25 491.36,521.21 491.62,520.22 491.88,519.28 492.13,518.38 492.39,517.55 492.65,516.77 492.91,516.06 493.16,515.41 493.42,514.85 493.68,514.35 493.94,513.95 494.20,513.63 494.45,513.40 494.71,513.22 494.97,513.06 495.23,512.91 495.48,512.80 495.74,512.73 496.00,512.70 496.28,512.72 496.56,512.78 496.84,512.86 497.12,512.97 497.40,513.10 497.68,513.25 497.96,513.40 498.22,513.57 498.48,513.81 498.74,514.10 498.99,514.44 499.25,514.84 499.51,515.29 499.77,515.78 500.02,516.32 500.28,516.91 500.54,517.53 500.80,518.20 501.05,518.90 501.31,519.64 501.57,520.40 501.83,521.20 502.08,522.03 502.34,522.88 502.60,523.75 502.86,524.64 503.11,525.55 503.37,526.48 503.63,527.42 503.89,528.37 504.14,529.33 504.40,530.30 504.66,531.30 504.91,532.38 505.17,533.53 505.42,534.75 505.68,536.05 505.94,537.42 506.19,538.86 506.45,540.37 506.71,541.96 506.96,543.61 507.22,545.34 507.48,547.13 507.73,549.00 507.99,550.93 508.24,552.93 508.50,555.00 508.76,557.32 509.02,559.96 509.28,562.88 509.54,566.01 509.80,569.29 510.06,572.67 510.32,576.09 510.58,579.49 510.84,582.81 511.10,586.00 511.10,586.00" fill="#1471bd"/>
<polyline points="484.10,586.00 484.37,581.38 484.64,576.51 484.91,571.58 485.19,566.77 485.46,562.28 485.73,558.29 486.00,555.00 486.25,552.37 486.51,549.88 486.76,547.51 487.02,545.27 487.27,543.16 487.52,541.16 487.78,539.28 488.03,537.52 488.28,535.87 488.54,534.32 488.79,532.88 489.05,531.54 489.30,530.30 489.56,529.09 489.82,527.90 490.07,526.72 490.33,525.56 490.59,524.43 490.85,523.32 491.10,522.25 491.36,521.21 491.62,520.22 491.88,519.28 492.13,518.38 492.39,517.55 492.65,516.77 492.91,516.06 493.16,515.41 493.42,514.85 493.68,514.35 493.94,513.95 494.20,513.63 494.45,513.40 494.71,513.22 494.97,513.06 495.23,512.91 495.48,512.80 495.74,512.73 496.00,512.70 496.28,512.72 496.56,512.78 496.84,512.86 497.12,512.97 497.40,513.10 497.68,513.25 497.96,513.40 498.22,513.57 498.48,513.81 498.74,514.10 498.99,514.44 499.25,514.84 499.51,515.29 499.77,515.78 500.02,516.32 500.28,516.91 500.54,517.53 500.80,518.20 501.05,518.90 501.31,519.64 501.57,520.40 501.83,521.20 502.08,522.03 502.34,522.88 502.60,523.75 502.86,524.64 503.11,525.55 503.37,526.48 503.63,527.42 503.89,528.37 504.14,529.33 504.40,530.30 504.66,531.30 504.91,532.38 505.17,533.53 505.42,534.75 505.68,536.05 505.94,537.42 506.19,538.86 506.45,540.37 506.71,541.96 506.96,543.61 507.22,545.34 507.48,547.13 507.73,549.00 507.99,550.93 508.24,552.93 508.50,555.00 508.76,557.32 509.02,559.96 509.28,562.88 509.54,566.01 509.80,569.29 510.06,572.67 510.32,576.09 510.58,579.49 510.84,582.81 511.10,586.00" fill="none" stroke="#0072bd" stroke-width="0.8" stroke-opacity="0.6" stroke-linejoin="round"/>
<polygon points="490.13,574.51 490.66,586 489.59,586" fill="#ffffff" fill-opacity="0.6"/>
<polygon points="493.40,563.11 493.98,586 492.83,586" fill="#ffffff" fill-opacity="0.6"/>
<polygon points="496.50,564.72 497.19,586 495.81,586" fill="#ffffff" fill-opacity="0.6"/>
<polygon points="498.76,567.89 499.41,586 498.11,586" fill="#ffffff" fill-opacity="0.6"/>
<polygon points="501.29,572.80 501.82,586 500.77,586" fill="#ffffff" fill-opacity="0.6"/>
<polyline points="511.00,586.00 511.30,480.00 512.30,425.00 512.80,408.00 513.10,403.50 513.60,408.00 515.50,440.00 517.80,490.00 518.70,586.00" fill="none" stroke="#0072bd" stroke-width="1.1" stroke-linejoin="round"/>
<polyline points="519.60,586.00 520.40,560.00 522.40,490.00 525.00,440.00 526.50,410.00 527.00,406.00 527.50,410.00 528.50,470.00 528.70,500.00 528.90,586.00" fill="none" stroke="#0072bd" stroke-width="1.1" stroke-linejoin="round"/>
<polygon points="528.90,586.00 528.90,586.00 529.16,582.65 529.42,579.17 529.69,575.64 529.95,572.13 530.21,568.73 530.48,565.52 530.74,562.58 531.00,560.00 531.26,557.69 531.51,555.42 531.77,553.21 532.03,551.07 532.29,548.99 532.54,547.00 532.80,545.11 533.06,543.32 533.31,541.64 533.57,540.09 533.83,538.67 534.09,537.39 534.34,536.26 534.60,535.30 534.85,534.45 535.11,533.61 535.36,532.80 535.61,532.01 535.86,531.24 536.12,530.50 536.37,529.77 536.62,529.07 536.88,528.40 537.13,527.75 537.38,527.12 537.63,526.52 537.89,525.94 538.14,525.39 538.39,524.87 538.65,524.38 538.90,523.91 539.15,523.47 539.40,523.07 539.66,522.69 539.91,522.34 540.16,522.02 540.42,521.73 540.67,521.47 540.92,521.25 541.18,521.06 541.43,520.90 541.70,520.75 541.96,520.61 542.23,520.48 542.50,520.37 542.77,520.28 543.03,520.22 543.30,520.20 543.57,520.23 543.84,520.30 544.11,520.42 544.38,520.56 544.65,520.73 544.92,520.90 545.18,521.08 545.43,521.28 545.68,521.52 545.93,521.78 546.18,522.08 546.43,522.41 546.68,522.77 546.93,523.16 547.18,523.58 547.43,524.04 547.68,524.52 547.94,525.04 548.19,525.59 548.44,526.16 548.69,526.77 548.94,527.42 549.19,528.09 549.44,528.80 549.69,529.54 549.94,530.31 550.19,531.11 550.44,531.94 550.69,532.81 550.95,533.71 551.20,534.64 551.45,535.61 551.70,536.61 551.95,537.64 552.20,538.70 552.46,539.97 552.71,541.56 552.97,543.46 553.22,545.63 553.48,548.07 553.73,550.75 553.99,553.64 554.24,556.73 554.50,560.00 554.76,564.05 555.02,569.11 555.28,574.74 555.54,580.51 555.80,586.00 555.80,586.00" fill="#1471bd"/>
<polyline points="528.90,586.00 529.16,582.65 529.42,579.17 529.69,575.64 529.95,572.13 530.21,568.73 530.48,565.52 530.74,562.58 531.00,560.00 531.26,557.69 531.51,555.42 531.77,553.21 532.03,551.07 532.29,548.99 532.54,547.00 532.80,545.11 533.06,543.32 533.31,541.64 533.57,540.09 533.83,538.67 534.09,537.39 534.34,536.26 534.60,535.30 534.85,534.45 535.11,533.61 535.36,532.80 535.61,532.01 535.86,531.24 536.12,530.50 536.37,529.77 536.62,529.07 536.88,528.40 537.13,527.75 537.38,527.12 537.63,526.52 537.89,525.94 538.14,525.39 538.39,524.87 538.65,524.38 538.90,523.91 539.15,523.47 539.40,523.07 539.66,522.69 539.91,522.34 540.16,522.02 540.42,521.73 540.67,521.47 540.92,521.25 541.18,521.06 541.43,520.90 541.70,520.75 541.96,520.61 542.23,520.48 542.50,520.37 542.77,520.28 543.03,520.22 543.30,520.20 543.57,520.23 543.84,520.30 544.11,520.42 544.38,520.56 544.65,520.73 544.92,520.90 545.18,521.08 545.43,521.28 545.68,521.52 545.93,521.78 546.18,522.08 546.43,522.41 546.68,522.77 546.93,523.16 547.18,523.58 547.43,524.04 547.68,524.52 547.94,525.04 548.19,525.59 548.44,526.16 548.69,526.77 548.94,527.42 549.19,528.09 549.44,528.80 549.69,529.54 549.94,530.31 550.19,531.11 550.44,531.94 550.69,532.81 550.95,533.71 551.20,534.64 551.45,535.61 551.70,536.61 551.95,537.64 552.20,538.70 552.46,539.97 552.71,541.56 552.97,543.46 553.22,545.63 553.48,548.07 553.73,550.75 553.99,553.64 554.24,556.73 554.50,560.00 554.76,564.05 555.02,569.11 555.28,574.74 555.54,580.51 555.80,586.00" fill="none" stroke="#0072bd" stroke-width="0.8" stroke-opacity="0.6" stroke-linejoin="round"/>
<polygon points="537.46,572.99 538.00,586 536.93,586" fill="#ffffff" fill-opacity="0.55"/>
<polygon points="540.87,570.05 541.49,586 540.24,586" fill="#ffffff" fill-opacity="0.55"/>
<polygon points="543.90,570.65 544.54,586 543.26,586" fill="#ffffff" fill-opacity="0.55"/>
<polygon points="546.62,570.33 547.21,586 546.02,586" fill="#ffffff" fill-opacity="0.55"/>
<polyline points="559.80,586.00 560.00,548.81 560.20,530.05 560.40,519.87 560.60,513.51 560.80,509.53 561.00,507.31 561.20,506.60 561.40,507.31 561.60,509.53 561.80,513.51 562.00,519.87 562.20,530.05 562.40,548.81 562.60,586.00 562.86,536.91 563.13,518.15 563.39,507.97 563.66,501.61 563.92,497.63 564.19,495.41 564.45,494.70 564.71,495.41 564.98,497.63 565.24,501.61 565.51,507.97 565.77,518.15 566.04,536.91 566.30,586.00 566.59,525.01 566.89,506.25 567.18,496.07 567.47,489.71 567.76,485.73 568.06,483.51 568.35,482.80 568.64,483.51 568.94,485.73 569.23,489.71 569.52,496.07 569.81,506.25 570.11,525.01 570.40,586.00 570.66,524.11 570.91,505.35 571.17,495.17 571.43,488.81 571.69,484.83 571.94,482.61 572.20,481.90 572.46,482.61 572.71,484.83 572.97,488.81 573.23,495.17 573.49,505.35 573.74,524.11 574.00,586.00 574.23,526.81 574.46,508.05 574.69,497.87 574.91,491.51 575.14,487.53 575.37,485.31 575.60,484.60 575.83,485.31 576.06,487.53 576.29,491.51 576.51,497.87 576.74,508.05 576.97,526.81 577.20,586.00" fill="none" stroke="#0072bd" stroke-width="1.0" stroke-linejoin="round"/>
<polygon points="579.40,586.00 579.40,586.00 579.67,579.20 579.95,572.21 580.23,565.61 580.50,560.00 580.76,555.50 581.01,551.22 581.27,547.22 581.53,543.55 581.79,540.25 582.04,537.38 582.30,535.00 582.56,532.88 582.82,530.82 583.08,528.83 583.34,526.92 583.59,525.10 583.85,523.39 584.11,521.80 584.37,520.35 584.63,519.04 584.89,517.88 585.15,516.90 585.41,516.10 585.67,515.50 585.92,515.10 586.25,514.76 586.57,514.50 586.90,514.40 587.22,514.50 587.54,514.76 587.86,515.10 588.12,515.50 588.38,516.09 588.64,516.88 588.90,517.85 589.16,518.98 589.42,520.28 589.68,521.72 589.94,523.30 590.20,525.00 590.46,526.82 590.72,528.73 590.98,530.75 591.24,532.84 591.50,535.00 591.78,537.79 592.07,541.29 592.35,545.38 592.63,549.94 592.92,554.85 593.20,560.00 593.48,565.70 593.75,572.29 594.02,579.23 594.30,586.00 594.30,586.00" fill="#1471bd"/>
<polyline points="579.40,586.00 579.67,579.20 579.95,572.21 580.23,565.61 580.50,560.00 580.76,555.50 581.01,551.22 581.27,547.22 581.53,543.55 581.79,540.25 582.04,537.38 582.30,535.00 582.56,532.88 582.82,530.82 583.08,528.83 583.34,526.92 583.59,525.10 583.85,523.39 584.11,521.80 584.37,520.35 584.63,519.04 584.89,517.88 585.15,516.90 585.41,516.10 585.67,515.50 585.92,515.10 586.25,514.76 586.57,514.50 586.90,514.40 587.22,514.50 587.54,514.76 587.86,515.10 588.12,515.50 588.38,516.09 588.64,516.88 588.90,517.85 589.16,518.98 589.42,520.28 589.68,521.72 589.94,523.30 590.20,525.00 590.46,526.82 590.72,528.73 590.98,530.75 591.24,532.84 591.50,535.00 591.78,537.79 592.07,541.29 592.35,545.38 592.63,549.94 592.92,554.85 593.20,560.00 593.48,565.70 593.75,572.29 594.02,579.23 594.30,586.00" fill="none" stroke="#0072bd" stroke-width="0.8" stroke-opacity="0.6" stroke-linejoin="round"/>
<polygon points="583.20,567.15 583.84,586 582.55,586" fill="#ffffff" fill-opacity="0.6"/>
<polygon points="585.08,571.76 585.79,586 584.38,586" fill="#ffffff" fill-opacity="0.6"/>
<polygon points="587.78,563.92 588.41,586 587.15,586" fill="#ffffff" fill-opacity="0.6"/>
<polygon points="589.70,565.00 590.44,586 588.96,586" fill="#ffffff" fill-opacity="0.6"/>
<polyline points="607.90,586.00 608.15,477.51 608.40,458.75 608.65,448.57 608.90,442.21 609.15,438.23 609.40,436.01 609.65,435.30 609.90,436.01 610.15,438.23 610.40,442.21 610.65,448.57 610.90,458.75 611.15,477.51 611.40,552.00 611.78,469.21 612.16,450.45 612.54,440.27 612.91,433.91 613.29,429.93 613.67,427.71 614.05,427.00 614.43,427.71 614.81,429.93 615.19,433.91 615.56,440.27 615.94,450.45 616.32,469.21 616.70,509.30 617.09,469.61 617.47,450.85 617.86,440.67 618.24,434.31 618.63,430.33 619.01,428.11 619.40,427.40 619.79,428.11 620.17,430.33 620.56,434.31 620.94,440.67 621.33,450.85 621.71,469.61 622.10,553.00 622.34,479.21 622.59,460.45 622.83,450.27 623.07,443.91 623.31,439.93 623.56,437.71 623.80,437.00 624.04,437.71 624.29,439.93 624.53,443.91 624.77,450.27 625.01,460.45 625.26,479.21 625.50,586.00" fill="none" stroke="#0072bd" stroke-width="1.0" stroke-linejoin="round"/>
<polygon points="640.10,586.00 640.10,586.00 640.38,580.67 640.66,575.20 640.94,569.79 641.22,564.66 641.50,560.00 641.77,555.88 642.03,551.86 642.30,548.05 642.57,544.53 642.83,541.38 643.10,538.70 643.36,536.37 643.61,534.06 643.87,531.81 644.13,529.68 644.38,527.71 644.64,525.93 644.90,524.40 645.15,523.16 645.41,522.24 645.67,521.70 645.95,521.36 646.22,521.10 646.50,521.00 646.80,521.10 647.11,521.35 647.41,521.70 647.68,522.24 647.95,523.18 648.22,524.46 648.49,526.03 648.75,527.85 649.02,529.85 649.29,531.99 649.56,534.21 649.83,536.46 650.10,538.70 650.37,541.06 650.64,543.68 650.91,546.53 651.19,549.60 651.46,552.88 651.73,556.35 652.00,560.00 652.25,563.71 652.50,567.87 652.75,572.32 653.00,576.93 653.25,581.54 653.50,586.00 653.50,586.00" fill="#1471bd"/>
<polyline points="640.10,586.00 640.38,580.67 640.66,575.20 640.94,569.79 641.22,564.66 641.50,560.00 641.77,555.88 642.03,551.86 642.30,548.05 642.57,544.53 642.83,541.38 643.10,538.70 643.36,536.37 643.61,534.06 643.87,531.81 644.13,529.68 644.38,527.71 644.64,525.93 644.90,524.40 645.15,523.16 645.41,522.24 645.67,521.70 645.95,521.36 646.22,521.10 646.50,521.00 646.80,521.10 647.11,521.35 647.41,521.70 647.68,522.24 647.95,523.18 648.22,524.46 648.49,526.03 648.75,527.85 649.02,529.85 649.29,531.99 649.56,534.21 649.83,536.46 650.10,538.70 650.37,541.06 650.64,543.68 650.91,546.53 651.19,549.60 651.46,552.88 651.73,556.35 652.00,560.00 652.25,563.71 652.50,567.87 652.75,572.32 653.00,576.93 653.25,581.54 653.50,586.00" fill="none" stroke="#0072bd" stroke-width="0.8" stroke-opacity="0.6" stroke-linejoin="round"/>
<polygon points="644.29,573.60 644.97,586 643.60,586" fill="#ffffff" fill-opacity="0.55"/>
<polygon points="646.97,573.08 647.58,586 646.35,586" fill="#ffffff" fill-opacity="0.55"/>
<polygon points="649.35,573.12 649.98,586 648.73,586" fill="#ffffff" fill-opacity="0.55"/>
<polyline points="656.20,586.00 656.41,536.41 656.61,517.65 656.82,507.47 657.03,501.11 657.24,497.13 657.44,494.91 657.65,494.20 657.86,494.91 658.06,497.13 658.27,501.11 658.48,507.47 658.69,517.65 658.89,536.41 659.10,586.00 659.36,533.91 659.61,515.15 659.87,504.97 660.13,498.61 660.39,494.63 660.64,492.41 660.90,491.70 661.16,492.41 661.41,494.63 661.67,498.61 661.93,504.97 662.19,515.15 662.44,533.91 662.70,586.00 663.02,536.41 663.34,517.65 663.66,507.47 663.99,501.11 664.31,497.13 664.63,494.91 664.95,494.20 665.27,494.91 665.59,497.13 665.91,501.11 666.24,507.47 666.56,517.65 666.88,536.41 667.20,586.00 667.48,549.01 667.76,530.25 668.04,520.07 668.31,513.71 668.59,509.73 668.87,507.51 669.15,506.80 669.43,507.51 669.71,509.73 669.99,513.71 670.26,520.07 670.54,530.25 670.82,549.01 671.10,586.00 671.31,561.61 671.51,542.85 671.72,532.67 671.93,526.31 672.14,522.33 672.34,520.11 672.55,519.40 672.76,520.11 672.96,522.33 673.17,526.31 673.38,532.67 673.59,542.85 673.79,561.61 674.00,586.00" fill="none" stroke="#0072bd" stroke-width="1.0" stroke-linejoin="round"/>
<polygon points="679.50,586.00 679.50,586.00 679.75,582.87 680.00,579.59 680.25,576.31 680.50,573.18 680.75,570.36 681.00,568.00 681.25,565.97 681.50,564.03 681.75,562.19 682.00,560.44 682.25,558.79 682.50,557.24 682.75,555.79 683.00,554.43 683.25,553.17 683.50,552.01 683.75,550.96 684.00,550.00 684.26,549.08 684.51,548.17 684.77,547.29 685.03,546.43 685.29,545.60 685.54,544.80 685.80,544.03 686.06,543.29 686.32,542.59 686.58,541.94 686.83,541.33 687.09,540.76 687.35,540.24 687.61,539.78 687.86,539.37 688.12,539.02 688.38,538.73 688.63,538.50 688.91,538.29 689.18,538.10 689.45,537.95 689.73,537.84 690.00,537.80 690.26,537.83 690.52,537.90 690.79,538.02 691.05,538.16 691.31,538.32 691.57,538.50 691.83,538.72 692.09,539.03 692.35,539.41 692.61,539.87 692.88,540.40 693.14,540.99 693.40,541.63 693.66,542.33 693.92,543.07 694.18,543.85 694.44,544.67 694.70,545.52 694.96,546.39 695.22,547.28 695.48,548.18 695.74,549.09 696.00,550.00 696.25,550.92 696.50,551.92 696.75,552.99 697.00,554.14 697.25,555.35 697.50,556.61 697.75,557.93 698.00,559.29 698.25,560.68 698.50,562.11 698.75,563.56 699.00,565.03 699.25,566.51 699.50,568.00 699.76,569.59 700.02,571.27 700.28,573.03 700.54,574.83 700.80,576.68 701.06,578.56 701.32,580.44 701.58,582.32 701.84,584.18 702.10,586.00 702.10,586.00" fill="#1471bd"/>
<polyline points="679.50,586.00 679.75,582.87 680.00,579.59 680.25,576.31 680.50,573.18 680.75,570.36 681.00,568.00 681.25,565.97 681.50,564.03 681.75,562.19 682.00,560.44 682.25,558.79 682.50,557.24 682.75,555.79 683.00,554.43 683.25,553.17 683.50,552.01 683.75,550.96 684.00,550.00 684.26,549.08 684.51,548.17 684.77,547.29 685.03,546.43 685.29,545.60 685.54,544.80 685.80,544.03 686.06,543.29 686.32,542.59 686.58,541.94 686.83,541.33 687.09,540.76 687.35,540.24 687.61,539.78 687.86,539.37 688.12,539.02 688.38,538.73 688.63,538.50 688.91,538.29 689.18,538.10 689.45,537.95 689.73,537.84 690.00,537.80 690.26,537.83 690.52,537.90 690.79,538.02 691.05,538.16 691.31,538.32 691.57,538.50 691.83,538.72 692.09,539.03 692.35,539.41 692.61,539.87 692.88,540.40 693.14,540.99 693.40,541.63 693.66,542.33 693.92,543.07 694.18,543.85 694.44,544.67 694.70,545.52 694.96,546.39 695.22,547.28 695.48,548.18 695.74,549.09 696.00,550.00 696.25,550.92 696.50,551.92 696.75,552.99 697.00,554.14 697.25,555.35 697.50,556.61 697.75,557.93 698.00,559.29 698.25,560.68 698.50,562.11 698.75,563.56 699.00,565.03 699.25,566.51 699.50,568.00 699.76,569.59 700.02,571.27 700.28,573.03 700.54,574.83 700.80,576.68 701.06,578.56 701.32,580.44 701.58,582.32 701.84,584.18 702.10,586.00" fill="none" stroke="#0072bd" stroke-width="0.8" stroke-opacity="0.6" stroke-linejoin="round"/>
<polyline points="704.40,586.00 704.70,500.00 705.80,445.00 706.30,430.00 706.60,426.50 707.10,430.00 709.00,470.00 711.30,510.00 712.30,586.00" fill="none" stroke="#0072bd" stroke-width="1.1" stroke-linejoin="round"/>
<polyline points="713.30,586.00 713.90,560.00 716.40,510.00 718.80,460.00 720.20,431.00 720.60,427.70 721.00,431.00 722.00,480.00 722.20,510.00 722.40,586.00" fill="none" stroke="#0072bd" stroke-width="1.1" stroke-linejoin="round"/>
<polygon points="725.30,586.00 725.30,586.00 725.57,583.96 725.85,581.86 726.12,579.74 726.40,577.63 726.67,575.56 726.95,573.58 727.23,571.71 727.50,570.00 727.75,568.53 728.00,567.09 728.25,565.68 728.50,564.31 728.75,562.97 729.00,561.66 729.25,560.40 729.50,559.19 729.75,558.02 730.00,556.90 730.25,555.84 730.50,554.83 730.75,553.88 731.00,553.00 731.25,552.14 731.51,551.27 731.76,550.41 732.01,549.56 732.27,548.72 732.52,547.91 732.77,547.12 733.03,546.37 733.28,545.65 733.53,544.97 733.79,544.34 734.04,543.77 734.29,543.26 734.55,542.81 734.80,542.43 735.05,542.12 735.30,541.90 735.60,541.69 735.90,541.50 736.20,541.34 736.50,541.24 736.80,541.20 737.08,541.24 737.35,541.35 737.63,541.50 737.90,541.69 738.18,541.90 738.43,542.13 738.69,542.44 738.94,542.82 739.19,543.27 739.45,543.78 739.70,544.35 739.96,544.96 740.21,545.63 740.47,546.34 740.72,547.09 740.97,547.87 741.23,548.68 741.48,549.52 741.74,550.37 741.99,551.24 742.25,552.12 742.50,553.00 742.75,553.91 743.01,554.88 743.26,555.91 743.52,557.00 743.77,558.16 744.02,559.38 744.28,560.68 744.53,562.04 744.78,563.48 745.04,564.99 745.29,566.58 745.55,568.25 745.80,570.00 746.07,572.12 746.33,574.64 746.60,577.41 746.87,580.32 747.13,583.22 747.40,586.00 747.40,586.00" fill="#1471bd"/>
<polyline points="725.30,586.00 725.57,583.96 725.85,581.86 726.12,579.74 726.40,577.63 726.67,575.56 726.95,573.58 727.23,571.71 727.50,570.00 727.75,568.53 728.00,567.09 728.25,565.68 728.50,564.31 728.75,562.97 729.00,561.66 729.25,560.40 729.50,559.19 729.75,558.02 730.00,556.90 730.25,555.84 730.50,554.83 730.75,553.88 731.00,553.00 731.25,552.14 731.51,551.27 731.76,550.41 732.01,549.56 732.27,548.72 732.52,547.91 732.77,547.12 733.03,546.37 733.28,545.65 733.53,544.97 733.79,544.34 734.04,543.77 734.29,543.26 734.55,542.81 734.80,542.43 735.05,542.12 735.30,541.90 735.60,541.69 735.90,541.50 736.20,541.34 736.50,541.24 736.80,541.20 737.08,541.24 737.35,541.35 737.63,541.50 737.90,541.69 738.18,541.90 738.43,542.13 738.69,542.44 738.94,542.82 739.19,543.27 739.45,543.78 739.70,544.35 739.96,544.96 740.21,545.63 740.47,546.34 740.72,547.09 740.97,547.87 741.23,548.68 741.48,549.52 741.74,550.37 741.99,551.24 742.25,552.12 742.50,553.00 742.75,553.91 743.01,554.88 743.26,555.91 743.52,557.00 743.77,558.16 744.02,559.38 744.28,560.68 744.53,562.04 744.78,563.48 745.04,564.99 745.29,566.58 745.55,568.25 745.80,570.00 746.07,572.12 746.33,574.64 746.60,577.41 746.87,580.32 747.13,583.22 747.40,586.00" fill="none" stroke="#0072bd" stroke-width="0.8" stroke-opacity="0.6" stroke-linejoin="round"/>
<polyline points="753.40,586.00 753.61,567.51 753.83,548.75 754.04,538.57 754.26,532.21 754.47,528.23 754.69,526.01 754.90,525.30 755.11,526.01 755.33,528.23 755.54,532.21 755.76,538.57 755.97,548.75 756.19,567.51 756.40,586.00 756.63,555.71 756.86,536.95 757.09,526.77 757.31,520.41 757.54,516.43 757.77,514.21 758.00,513.50 758.23,514.21 758.46,516.43 758.69,520.41 758.91,526.77 759.14,536.95 759.37,555.71 759.60,586.00 759.89,542.31 760.19,523.55 760.48,513.37 760.77,507.01 761.06,503.03 761.36,500.81 761.65,500.10 761.94,500.81 762.24,503.03 762.53,507.01 762.82,513.37 763.11,523.55 763.41,542.31 763.70,586.00 763.97,540.61 764.24,521.85 764.51,511.67 764.79,505.31 765.06,501.33 765.33,499.11 765.60,498.40 765.87,499.11 766.14,501.33 766.41,505.31 766.69,511.67 766.96,521.85 767.23,540.61 767.50,586.00 767.74,543.21 767.97,524.45 768.21,514.27 768.44,507.91 768.68,503.93 768.91,501.71 769.15,501.00 769.39,501.71 769.62,503.93 769.86,507.91 770.09,514.27 770.33,524.45 770.56,543.21 770.80,586.00" fill="none" stroke="#0072bd" stroke-width="1.0" stroke-linejoin="round"/>
<polygon points="774.20,586.00 774.20,586.00 774.48,581.37 774.75,576.65 775.02,572.11 775.30,568.00 775.58,564.12 775.87,560.37 776.15,556.82 776.43,553.53 776.72,550.57 777.00,548.00 777.25,545.91 777.50,543.83 777.75,541.79 778.01,539.82 778.26,537.96 778.51,536.25 778.76,534.71 779.01,533.38 779.26,532.30 779.52,531.49 779.77,531.00 780.05,530.66 780.32,530.40 780.60,530.30 780.87,530.40 781.14,530.66 781.41,531.00 781.66,531.50 781.91,532.30 782.17,533.36 782.42,534.67 782.68,536.19 782.93,537.88 783.18,539.73 783.44,541.69 783.69,543.75 783.95,545.86 784.20,548.00 784.47,550.49 784.73,553.41 785.00,556.70 785.27,560.27 785.53,564.06 785.80,568.00 786.05,572.07 786.30,576.62 786.55,581.36 786.80,586.00 786.80,586.00" fill="#1471bd"/>
<polyline points="774.20,586.00 774.48,581.37 774.75,576.65 775.02,572.11 775.30,568.00 775.58,564.12 775.87,560.37 776.15,556.82 776.43,553.53 776.72,550.57 777.00,548.00 777.25,545.91 777.50,543.83 777.75,541.79 778.01,539.82 778.26,537.96 778.51,536.25 778.76,534.71 779.01,533.38 779.26,532.30 779.52,531.49 779.77,531.00 780.05,530.66 780.32,530.40 780.60,530.30 780.87,530.40 781.14,530.66 781.41,531.00 781.66,531.50 781.91,532.30 782.17,533.36 782.42,534.67 782.68,536.19 782.93,537.88 783.18,539.73 783.44,541.69 783.69,543.75 783.95,545.86 784.20,548.00 784.47,550.49 784.73,553.41 785.00,556.70 785.27,560.27 785.53,564.06 785.80,568.00 786.05,572.07 786.30,576.62 786.55,581.36 786.80,586.00" fill="none" stroke="#0072bd" stroke-width="0.8" stroke-opacity="0.6" stroke-linejoin="round"/>
<polyline points="801.40,586.00 801.67,492.41 801.94,473.65 802.21,463.47 802.49,457.11 802.76,453.13 803.03,450.91 803.30,450.20 803.57,450.91 803.84,453.13 804.11,457.11 804.39,463.47 804.66,473.65 804.93,492.41 805.20,566.00 805.57,483.51 805.94,464.75 806.31,454.57 806.69,448.21 807.06,444.23 807.43,442.01 807.80,441.30 808.17,442.01 808.54,444.23 808.91,448.21 809.29,454.57 809.66,464.75 810.03,483.51 810.40,523.50 810.76,483.51 811.13,464.75 811.49,454.57 811.86,448.21 812.22,444.23 812.59,442.01 812.95,441.30 813.31,442.01 813.68,444.23 814.04,448.21 814.41,454.57 814.77,464.75 815.14,483.51 815.50,566.00 815.74,492.41 815.99,473.65 816.23,463.47 816.47,457.11 816.71,453.13 816.96,450.91 817.20,450.20 817.44,450.91 817.69,453.13 817.93,457.11 818.17,463.47 818.41,473.65 818.66,492.41 818.90,586.00" fill="none" stroke="#0072bd" stroke-width="1.0" stroke-linejoin="round"/>
<polygon points="834.10,586.00 834.10,586.00 834.40,580.51 834.70,575.02 835.00,570.00 835.25,566.13 835.50,562.32 835.75,558.67 836.00,555.33 836.25,552.40 836.50,550.00 836.76,547.82 837.03,545.70 837.29,543.68 837.56,541.76 837.82,539.98 838.09,538.36 838.35,536.92 838.61,535.68 838.88,534.66 839.14,533.90 839.41,533.40 839.67,533.06 839.94,532.80 840.20,532.70 840.49,532.80 840.79,533.06 841.08,533.40 841.35,533.89 841.61,534.70 841.88,535.78 842.14,537.10 842.41,538.63 842.67,540.32 842.94,542.14 843.20,544.06 843.47,546.03 843.73,548.02 844.00,550.00 844.25,551.93 844.50,554.02 844.75,556.27 845.00,558.69 845.25,561.27 845.50,564.01 845.75,566.92 846.00,570.00 846.25,573.53 846.50,577.58 846.75,581.84 847.00,586.00 847.00,586.00" fill="#1471bd"/>
<polyline points="834.10,586.00 834.40,580.51 834.70,575.02 835.00,570.00 835.25,566.13 835.50,562.32 835.75,558.67 836.00,555.33 836.25,552.40 836.50,550.00 836.76,547.82 837.03,545.70 837.29,543.68 837.56,541.76 837.82,539.98 838.09,538.36 838.35,536.92 838.61,535.68 838.88,534.66 839.14,533.90 839.41,533.40 839.67,533.06 839.94,532.80 840.20,532.70 840.49,532.80 840.79,533.06 841.08,533.40 841.35,533.89 841.61,534.70 841.88,535.78 842.14,537.10 842.41,538.63 842.67,540.32 842.94,542.14 843.20,544.06 843.47,546.03 843.73,548.02 844.00,550.00 844.25,551.93 844.50,554.02 844.75,556.27 845.00,558.69 845.25,561.27 845.50,564.01 845.75,566.92 846.00,570.00 846.25,573.53 846.50,577.58 846.75,581.84 847.00,586.00" fill="none" stroke="#0072bd" stroke-width="0.8" stroke-opacity="0.6" stroke-linejoin="round"/>
<polyline points="849.70,586.00 849.92,546.71 850.14,527.95 850.36,517.77 850.59,511.41 850.81,507.43 851.03,505.21 851.25,504.50 851.47,505.21 851.69,507.43 851.91,511.41 852.14,517.77 852.36,527.95 852.58,546.71 852.80,586.00 853.06,544.41 853.31,525.65 853.57,515.47 853.83,509.11 854.09,505.13 854.34,502.91 854.60,502.20 854.86,502.91 855.11,505.13 855.37,509.11 855.63,515.47 855.89,525.65 856.14,544.41 856.40,586.00 856.70,545.91 857.00,527.15 857.30,516.97 857.60,510.61 857.90,506.63 858.20,504.41 858.50,503.70 858.80,504.41 859.10,506.63 859.40,510.61 859.70,516.97 860.00,527.15 860.30,545.91 860.60,586.00 860.88,558.91 861.16,540.15 861.44,529.97 861.71,523.61 861.99,519.63 862.27,517.41 862.55,516.70 862.83,517.41 863.11,519.63 863.39,523.61 863.66,529.97 863.94,540.15 864.22,558.91 864.50,586.00 864.71,571.11 864.91,552.35 865.12,542.17 865.33,535.81 865.54,531.83 865.74,529.61 865.95,528.90 866.16,529.61 866.36,531.83 866.57,535.81 866.78,542.17 866.99,552.35 867.19,571.11 867.40,586.00" fill="none" stroke="#0072bd" stroke-width="1.0" stroke-linejoin="round"/>
<polygon points="873.00,586.00 873.00,586.00 873.26,583.94 873.51,581.79 873.77,579.62 874.03,577.49 874.29,575.47 874.54,573.62 874.80,572.00 875.07,570.51 875.33,569.09 875.60,567.74 875.87,566.46 876.13,565.24 876.40,564.07 876.67,562.96 876.93,561.89 877.20,560.87 877.47,559.88 877.73,558.93 878.00,558.00 878.26,557.09 878.53,556.16 878.79,555.22 879.06,554.29 879.32,553.37 879.58,552.46 879.85,551.59 880.11,550.75 880.37,549.95 880.64,549.21 880.90,548.52 881.17,547.91 881.43,547.37 881.69,546.92 881.96,546.56 882.22,546.30 882.50,546.09 882.77,545.90 883.05,545.74 883.32,545.64 883.60,545.60 883.90,545.64 884.20,545.74 884.50,545.90 884.80,546.09 885.10,546.30 885.35,546.55 885.61,546.93 885.87,547.42 886.13,548.00 886.39,548.68 886.65,549.44 886.91,550.27 887.17,551.16 887.43,552.09 887.69,553.06 887.95,554.06 888.20,555.07 888.46,556.09 888.72,557.10 888.98,558.10 889.24,559.07 889.50,560.00 889.75,560.88 890.00,561.75 890.25,562.64 890.50,563.53 890.75,564.43 891.00,565.35 891.25,566.28 891.50,567.24 891.75,568.21 892.00,569.22 892.25,570.26 892.50,571.32 892.75,572.43 893.00,573.58 893.25,574.77 893.50,576.00 893.77,577.44 894.03,579.05 894.30,580.76 894.57,582.52 894.83,584.29 895.10,586.00 895.10,586.00" fill="#1471bd"/>
<polyline points="873.00,586.00 873.26,583.94 873.51,581.79 873.77,579.62 874.03,577.49 874.29,575.47 874.54,573.62 874.80,572.00 875.07,570.51 875.33,569.09 875.60,567.74 875.87,566.46 876.13,565.24 876.40,564.07 876.67,562.96 876.93,561.89 877.20,560.87 877.47,559.88 877.73,558.93 878.00,558.00 878.26,557.09 878.53,556.16 878.79,555.22 879.06,554.29 879.32,553.37 879.58,552.46 879.85,551.59 880.11,550.75 880.37,549.95 880.64,549.21 880.90,548.52 881.17,547.91 881.43,547.37 881.69,546.92 881.96,546.56 882.22,546.30 882.50,546.09 882.77,545.90 883.05,545.74 883.32,545.64 883.60,545.60 883.90,545.64 884.20,545.74 884.50,545.90 884.80,546.09 885.10,546.30 885.35,546.55 885.61,546.93 885.87,547.42 886.13,548.00 886.39,548.68 886.65,549.44 886.91,550.27 887.17,551.16 887.43,552.09 887.69,553.06 887.95,554.06 888.20,555.07 888.46,556.09 888.72,557.10 888.98,558.10 889.24,559.07 889.50,560.00 889.75,560.88 890.00,561.75 890.25,562.64 890.50,563.53 890.75,564.43 891.00,565.35 891.25,566.28 891.50,567.24 891.75,568.21 892.00,569.22 892.25,570.26 892.50,571.32 892.75,572.43 893.00,573.58 893.25,574.77 893.50,576.00 893.77,577.44 894.03,579.05 894.30,580.76 894.57,582.52 894.83,584.29 895.10,586.00" fill="none" stroke="#0072bd" stroke-width="0.8" stroke-opacity="0.6" stroke-linejoin="round"/>
<polyline points="898.30,586.00 898.60,500.00 899.40,450.00 899.80,437.00 900.00,433.70 900.40,437.00 902.50,470.00 904.80,510.00 906.00,586.00" fill="none" stroke="#0072bd" stroke-width="1.1" stroke-linejoin="round"/>
</g>
<g stroke="#262626" stroke-width="1" shape-rendering="crispEdges" fill="none">
<rect x="133.5" y="48.5" width="773" height="536"/>
</g>
<rect x="679.5" y="56.5" width="197" height="33" fill="#fff" stroke="#262626" stroke-width="1" shape-rendering="crispEdges"/>
<line x1="683" y1="66.5" x2="723" y2="66.5" stroke="#0072bd" stroke-width="1"/>
<line x1="683" y1="80.5" x2="723" y2="80.5" stroke="#0072bd" stroke-width="1" stroke-dasharray="8,2,3,3"/>
</svg>
<div class="t" style="left:429px;top:30.6px;font-size:14.8px;font-weight:bold;">Magnitude Response (dB)</div>
<div class="t" style="left:463.6px;top:606.2px;font-size:14.65px;">Frequency (MHz)</div>
<div class="t" style="left:81.5px;top:367.1px;font-size:14.8px;transform:rotate(-90deg);transform-origin:0 0;">Magnitude (dB)</div>
<div class="t" style="right:896.5px;top:68px;font-size:13px;text-align:right;transform:scaleY(1.1);transform-origin:0 50%;">0</div>
<div class="t" style="right:896.5px;top:230px;font-size:13px;text-align:right;transform:scaleY(1.1);transform-origin:0 50%;">-50</div>
<div class="t" style="right:896.5px;top:392px;font-size:13px;text-align:right;transform:scaleY(1.1);transform-origin:0 50%;">-100</div>
<div class="t" style="right:896.5px;top:554px;font-size:13px;text-align:right;transform:scaleY(1.1);transform-origin:0 50%;">-150</div>
<div class="t" style="left:113px;width:41px;top:589px;font-size:13px;text-align:center;transform:scaleY(1.1);transform-origin:0 0;">0</div>
<div class="t" style="left:238px;width:41px;top:589px;font-size:13px;text-align:center;transform:scaleY(1.1);transform-origin:0 0;">10</div>
<div class="t" style="left:364px;width:41px;top:589px;font-size:13px;text-align:center;transform:scaleY(1.1);transform-origin:0 0;">20</div>
<div class="t" style="left:490px;width:41px;top:589px;font-size:13px;text-align:center;transform:scaleY(1.1);transform-origin:0 0;">30</div>
<div class="t" style="left:616px;width:41px;top:589px;font-size:13px;text-align:center;transform:scaleY(1.1);transform-origin:0 0;">40</div>
<div class="t" style="left:742px;width:41px;top:589px;font-size:13px;text-align:center;transform:scaleY(1.1);transform-origin:0 0;">50</div>
<div class="t" style="left:868px;width:41px;top:589px;font-size:13px;text-align:center;transform:scaleY(1.1);transform-origin:0 0;">60</div>
<div class="t" style="left:726px;top:60px;font-size:12px;">DUC filter chain: Quantized</div>
<div class="t" style="left:726px;top:75px;font-size:12px;">DUC filter chain: Reference</div>
</body></html>
